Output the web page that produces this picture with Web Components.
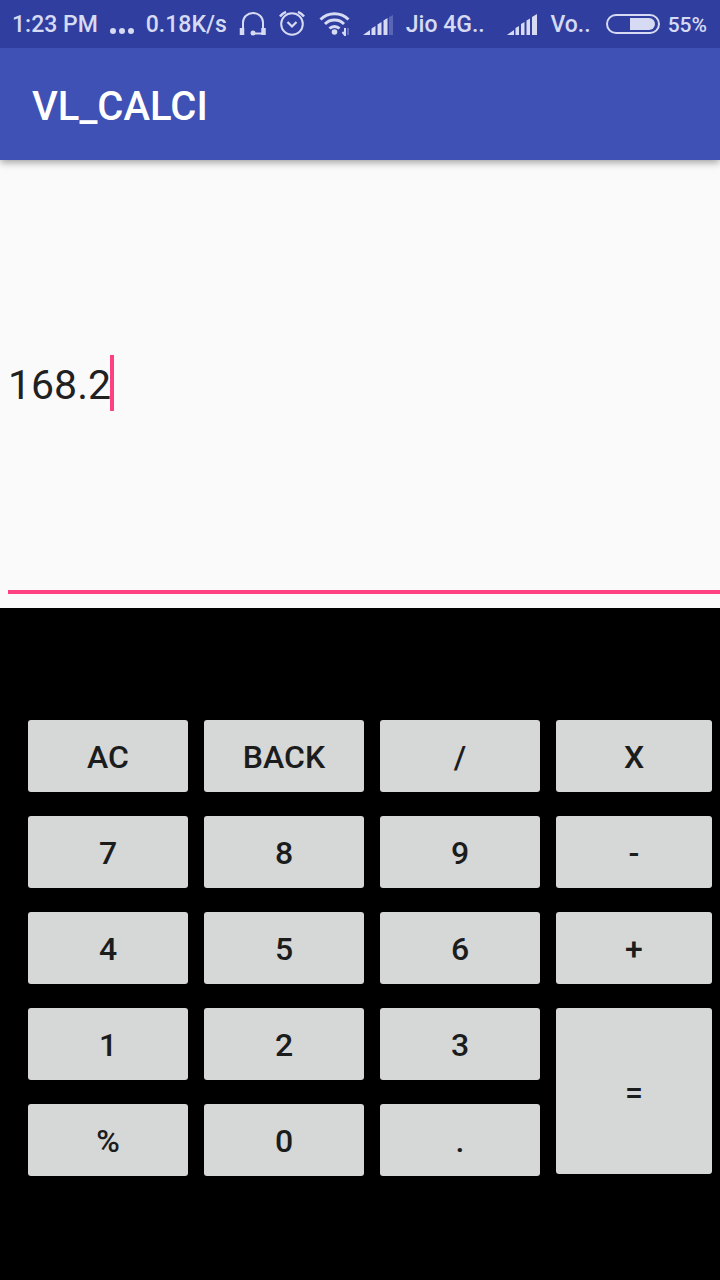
<!DOCTYPE html>
<html lang="en">
<head>
<meta charset="utf-8">
<meta name="viewport" content="width=device-width, initial-scale=1">
<title>VL_CALCI</title>
<style>
html, body { margin: 0; height: 100%; }
body { font-family: Roboto, "Noto Sans", sans-serif; background: #000; }
</style>
</head>
<body>
<calc-app></calc-app>
<script>
const define = (name, html, setup) => {
  const template = document.createElement('template');
  template.innerHTML = html;
  customElements.define(name, class extends HTMLElement {
    constructor() {
      super();
      this.attachShadow({ mode: 'open' }).append(template.content.cloneNode(true));
    }
    connectedCallback() { if (setup) setup(this, this.shadowRoot); }
  });
};

define('status-icon', `
<style>
:host { display: block; flex: none; height: 32px; color: #d6daf3; }
svg { display: none; height: 32px; }
:host([name=more]) .more, :host([name=headset]) .headset, :host([name=alarm]) .alarm,
:host([name=wifi]) .wifi, :host([name=signal]) .signal, :host([name=signal-full]) .full,
:host([name=battery]) .battery { display: block; }
</style>
<svg class="more" width="24" viewBox="0 0 24 32" fill="currentColor"><circle cx="3" cy="23" r="3"/><circle cx="12" cy="23" r="3"/><circle cx="21" cy="23" r="3"/></svg>
<svg class="headset" width="28" viewBox="0 0 28 32" fill="none" stroke="currentColor" stroke-width="2"><path d="M4 22V14.500a10 9.500 0 0 1 20 0V25.500H14"/><path d="M3 20v7M24.500 20v7" stroke-width="4.500"/><circle cx="14" cy="25" r="2.500" fill="currentColor" stroke="none"/></svg>
<svg class="alarm" width="28" viewBox="0 0 28 32" fill="none" stroke="currentColor" stroke-width="2"><circle cx="13" cy="16" r="10.800"/><path d="M8.500 14l4.500 4.500L17.500 14" stroke-width="2.200"/><path d="M1 8.500A15 15 0 0 1 7 3.800M19 3.800a15 15 0 0 1 6 4.700" stroke-width="2.500"/></svg>
<svg class="wifi" width="32" viewBox="0 0 32 32" fill="none" stroke="currentColor" stroke-width="3"><path d="M1.500 11.500a20 20 0 0 1 28 0M6 16a13.500 13.500 0 0 1 19 0M10.500 20.500a7 7 0 0 1 10 0"/><circle cx="15.500" cy="24" r="2.800" fill="currentColor" stroke="none"/><path d="M26 20v8M26 27l-2.500-3" stroke-width="2"/><path d="M29 20v7" stroke-width="2" opacity=".3"/></svg>
<svg class="signal" width="31" viewBox="0 0 31 32" fill="currentColor"><path d="M0 27l7-5v5zM8.500 20.500l4-2.500v9h-4zM14.500 16.500l4-2.500v13h-4zM20.500 12.500l4-2.500v17h-4z"/><path d="M26 9l4-2v20h-4z" opacity=".25"/></svg>
<svg class="full" width="31" viewBox="0 0 31 32" fill="currentColor"><path d="M0 27l7-5v5zM8.500 20l3.500-2v9H8.500zM14 16l3.500-2v13H14zM19.500 12.500l3.500-2v16.500h-3.500zM25 9l5-3v21h-5z"/></svg>
<svg class="battery" width="54" viewBox="0 0 54 32"><rect x="1" y="7" width="52" height="18" rx="9" fill="none" stroke="currentColor" stroke-width="2"/><path d="M24 10h19a6 6 0 0 1 0 12H24z" fill="currentColor"/></svg>
`);

define('status-bar', `
<style>
:host { display: flex; align-items: center; justify-content: space-between; height: 48px; padding: 0 13px 0 12px; box-sizing: border-box;
  position: relative; z-index: 2;
  background: #303f9f; color: #d6daf3; font-size: 23px; font-weight: 500; line-height: 32px; white-space: nowrap; overflow: hidden; }
div { display: flex; align-items: center; gap: 12px; }
span { padding-top: 2px; }
.power { gap: 8px; }
.power span { font-size: 21px; }
.end { gap: 15px; }
</style>
<div>
  <span>1:23 PM</span><status-icon name="more"></status-icon><span>0.18K/s</span>
  <status-icon name="headset"></status-icon><status-icon name="alarm"></status-icon><status-icon name="wifi"></status-icon><status-icon name="signal"></status-icon><span>Jio 4G..</span>
</div>
<div class="end">
  <div><status-icon name="signal-full"></status-icon><span>Vo..</span></div>
  <div class="power"><status-icon name="battery"></status-icon><span>55%</span></div>
</div>
`);

define('app-bar', `
<style>
:host { display: flex; align-items: center; height: 112px; padding: 6px 32px 0; box-sizing: border-box; background: #3f51b5;
  color: #fff; box-shadow: 0 2px 8px rgba(0,0,0,.4); z-index: 1; }
h1 { margin: 0; font-size: 40px; line-height: 48px; font-weight: 500; }
</style>
<h1><slot></slot></h1>
`);

define('calc-display', `
<style>
:host { display: flex; flex-direction: column; padding: 0 0 14px 8px; box-sizing: border-box; background: #fafafa; }
label { flex: 1; display: flex; align-items: center; padding-top: 16px; border-bottom: 4px solid #ff4081; cursor: text; }
input { field-sizing: content; border: 0; padding: 4px 0 0; margin: 0; outline: 0; background: none; color: #212121; font: 400 41px/56px Roboto, sans-serif; caret-color: transparent; }
i { width: 4px; height: 56px; margin-left: -1px; background: #ff4081; }
</style>
<label><input type="text" aria-label="Expression" value=""><i></i></label>
`, (host, root) => { root.querySelector('input').value = host.getAttribute('value'); });

define('calc-key', `
<style>
:host { display: block; }
:host([tall]) { grid-row: span 2; padding-bottom: 2px; }
button { display: block; box-sizing: border-box; width: 100%; height: 100%; min-height: 72px; padding: 2px 0 0; border: 0; border-radius: 3px; background: #d6d7d7;
  color: #1b1c1c; font: 500 32px/40px Roboto, sans-serif; }
</style>
<button type="button"><slot></slot></button>
`);

define('calc-pad', `
<style>
:host { display: grid; grid-template-columns: 40fr 40fr 40fr 39fr; grid-auto-rows: 72px; gap: 24px 16px; padding: 112px 8px 104px 28px; background: #000; }
</style>
<slot></slot>
`);

define('calc-app', `
<style>
:host { display: flex; flex-direction: column; min-height: 100%; }
calc-display { flex: 1; }
</style>
<status-bar></status-bar>
<app-bar>VL_CALCI</app-bar>
<calc-display value="168.2"></calc-display>
<calc-pad>
  <calc-key>AC</calc-key><calc-key>BACK</calc-key><calc-key>/</calc-key><calc-key>X</calc-key>
  <calc-key>7</calc-key><calc-key>8</calc-key><calc-key>9</calc-key><calc-key>-</calc-key>
  <calc-key>4</calc-key><calc-key>5</calc-key><calc-key>6</calc-key><calc-key>+</calc-key>
  <calc-key>1</calc-key><calc-key>2</calc-key><calc-key>3</calc-key><calc-key tall>=</calc-key>
  <calc-key>%</calc-key><calc-key>0</calc-key><calc-key>.</calc-key>
</calc-pad>
`);
</script>
</body>
</html>
